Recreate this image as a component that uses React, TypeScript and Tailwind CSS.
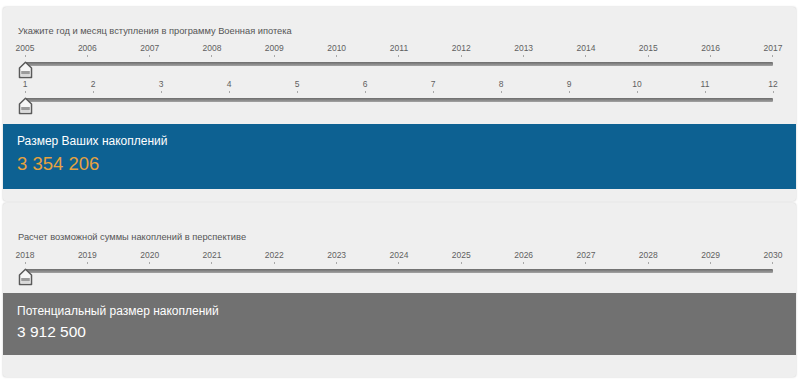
import React from 'react';

const years1 = ['2005', '2006', '2007', '2008', '2009', '2010', '2011', '2012', '2013', '2014', '2015', '2016', '2017'];
const months = ['1', '2', '3', '4', '5', '6', '7', '8', '9', '10', '11', '12'];
const years2 = ['2018', '2019', '2020', '2021', '2022', '2023', '2024', '2025', '2026', '2027', '2028', '2029', '2030'];

function Handle() {
  return (
    <svg className="absolute left-[-7px] top-[-1px]" width="15" height="18" viewBox="0 0 15 18">
      <path d="M1.5 16.5 L1.5 7 L7.5 1.2 L13.5 7 L13.5 16.5 Z" fill="#f7f7f7" stroke="#5a5a5a" strokeWidth="1.5" strokeLinejoin="round" />
      <rect x="3.2" y="10" width="8.6" height="3" fill="#9b9b9b" />
      <rect x="3.2" y="13" width="8.6" height="2.4" fill="#d9d9d9" />
    </svg>
  );
}

function Slider({ labels, className }: { labels: string[]; className?: string }) {
  return (
    <div className={`ml-[22px] mr-[23px] ${className ?? ''}`}>
      <div className="flex justify-between h-[12px] text-[8.5px] leading-[12px] text-[#5f5f5f]">
        {labels.map((l) => (
          <div key={l} className="w-0 flex justify-center whitespace-nowrap">
            {l}
          </div>
        ))}
      </div>
      <div className="flex justify-between h-[3px] mt-[1px]">
        {labels.map((l) => (
          <div key={l} className="w-0 flex justify-center">
            <span className="w-px h-[2px] shrink-0 bg-[#a8a8a8]" />
          </div>
        ))}
      </div>
      <div className="relative mt-[4px] h-[4px] rounded-[1px] bg-linear-to-b from-[#6c6c6c] to-[#a3a3a3]">
        <Handle />
      </div>
    </div>
  );
}

export default function App() {
  return (
    <div className="w-[800px] h-[382px] bg-white overflow-hidden pt-[7px]" style={{ fontFamily: '"Liberation Sans", Arial, sans-serif' }}>
      {/* Card 1: entry date */}
      <div className="ml-[3px] mr-[4px] h-[194px] bg-[#efefef] rounded-[3px] shadow-[0_0_2px_rgba(0,0,0,0.25)]">
        <div className="pt-[18px] pl-[15px] text-[9.3px] leading-[12px] text-[#555]">
          Укажите год и месяц вступления в программу Военная ипотека
        </div>
        <Slider labels={years1} className="mt-[5px]" />
        <Slider labels={months} className="mt-[12px]" />
        <div className="mt-[22px] h-[65px] bg-[#0d6192] pl-[14px] pt-[9px]">
          <div className="text-[12px] leading-[16px] text-white">Размер Ваших накоплений</div>
          <div className="mt-[4px] text-[18.5px] leading-[22px] text-[#e6a23f]">3 354 206</div>
        </div>
      </div>

      {/* Card 2: projection */}
      <div className="mt-[2px] ml-[3px] mr-[4px] h-[174px] bg-[#efefef] rounded-[3px] shadow-[0_0_2px_rgba(0,0,0,0.25)]">
        <div className="pt-[28px] pl-[15px] text-[9.3px] leading-[12px] text-[#555]">
          Расчет возможной суммы накоплений в перспективе
        </div>
        <Slider labels={years2} className="mt-[6px]" />
        <div className="mt-[20px] h-[62px] bg-[#717171] pl-[14px] pt-[10px]">
          <div className="text-[12px] leading-[16px] text-white">Потенциальный размер накоплений</div>
          <div className="mt-[3px] text-[15.5px] leading-[20px] text-white">3 912 500</div>
        </div>
      </div>
    </div>
  );
}
